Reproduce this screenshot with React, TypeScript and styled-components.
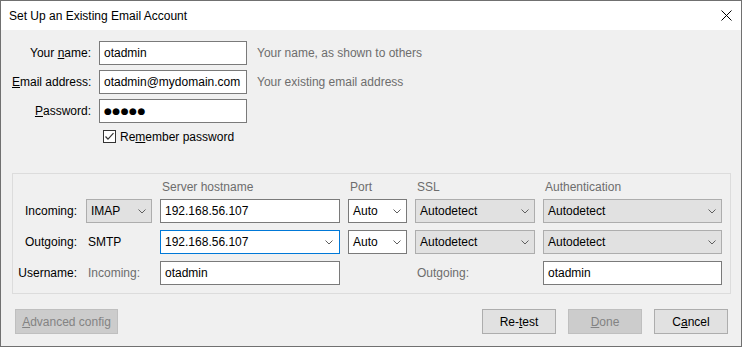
import styled, { createGlobalStyle } from 'styled-components';

const GlobalStyle = createGlobalStyle`
  html, body {
    margin: 0;
    padding: 0;
    background: #fff;
  }
  body {
    font-family: 'Liberation Sans', Arial, sans-serif;
    font-size: 12px;
    color: #000;
  }
`;

const Window = styled.div`
  width: 742px;
  height: 347px;
  box-sizing: border-box;
  border: 1px solid #707070;
  background: #f0f0f0;
  display: flex;
  flex-direction: column;
`;

const TitleBar = styled.div`
  height: 29px;
  background: #fff;
  display: flex;
  align-items: center;
  justify-content: space-between;
  padding: 0 9px 0 8px;
  font-size: 12px;
`;

const Body = styled.div`
  flex: 1;
  display: flex;
  flex-direction: column;
  padding: 11px 10px 0 11px;
`;

const AccountGrid = styled.div`
  display: grid;
  grid-template-columns: 79px 148px auto;
  grid-template-rows: 24px 24px 24px 17px;
  column-gap: 8px;
  row-gap: 5px;
  align-items: center;
`;

const FieldLabel = styled.label`
  text-align: right;
  white-space: nowrap;
`;

const Hint = styled.span`
  color: #6d6d6d;
  padding-left: 2px;
  white-space: nowrap;
`;

const Field = styled.div<{ $focused?: boolean }>`
  height: 24px;
  box-sizing: border-box;
  background: #fff;
  border: 1px solid ${p => (p.$focused ? '#0078d7' : '#7a7a7a')};
  padding: 0 6px 0 4px;
  display: flex;
  align-items: center;
  justify-content: space-between;
  white-space: nowrap;
  overflow: hidden;
`;

const Dots = styled.span`
  font-family: 'DejaVu Sans', sans-serif;
  font-size: 9px;
  letter-spacing: 0.5px;
`;

const CheckRow = styled.div`
  grid-column: 2 / 4;
  height: 17px;
  display: flex;
  align-items: center;
  gap: 4px;
  padding-left: 4px;
`;

const Group = styled.div`
  margin-top: 28px;
  border: 1px solid #dcdcdc;
  padding: 5px 7px 8px 0;
  display: flex;
  flex-direction: column;
  gap: 4px;
`;

const ServerGrid = styled.div`
  display: grid;
  grid-template-columns: 65px 66px 180px 59px 120px 179px;
  column-gap: 8px;
  row-gap: 7px;
  grid-auto-rows: 24px;
  align-items: center;
`;

const HeaderGrid = styled(ServerGrid)`
  grid-auto-rows: 16px;
`;

const ColHead = styled.span<{ $col: number }>`
  grid-column: ${p => p.$col};
  color: #6d6d6d;
  padding-left: 2px;
  line-height: 16px;
  white-space: nowrap;
`;

const RowLabel = styled.span`
  text-align: right;
  padding-right: 1px;
  white-space: nowrap;
`;

const PlainText = styled.span<{ $muted?: boolean }>`
  color: ${p => (p.$muted ? '#6d6d6d' : '#000')};
  padding-left: 2px;
  white-space: nowrap;
`;

const Select = styled.div<{ $tone: 'grey' | 'white' }>`
  height: 24px;
  box-sizing: border-box;
  background: ${p => (p.$tone === 'grey' ? '#e1e1e1' : '#fff')};
  border: 1px solid ${p => (p.$tone === 'grey' ? '#adadad' : '#7a7a7a')};
  padding: 0 5px 0 4px;
  display: flex;
  align-items: center;
  justify-content: space-between;
  white-space: nowrap;
`;

const ButtonRow = styled.div`
  margin-top: 15px;
  display: flex;
  align-items: center;
  padding: 0 3px;
`;

const Spacer = styled.div`
  flex: 1;
`;

const Actions = styled.div`
  display: flex;
  gap: 12px;
`;

const Button = styled.button<{ $width: number; $disabled?: boolean }>`
  width: ${p => p.$width}px;
  height: 25px;
  box-sizing: border-box;
  font-family: 'Liberation Sans', Arial, sans-serif;
  font-size: 12px;
  padding: 0;
  color: ${p => (p.$disabled ? '#838383' : '#000')};
  background: ${p => (p.$disabled ? '#cccccc' : '#e1e1e1')};
  border: 1px solid ${p => (p.$disabled ? '#bfbfbf' : '#adadad')};
  border-radius: 0;
`;

const Chevron = () => (
  <svg width="8" height="5" viewBox="0 0 8 5">
    <path d="M0.5 0.5 L4 4 L7.5 0.5" stroke="#5f5f5f" fill="none" strokeWidth="1" />
  </svg>
);

const CheckBox = () => (
  <svg width="13" height="13" viewBox="0 0 13 13">
    <rect x="0.5" y="0.5" width="12" height="12" fill="#fff" stroke="#333" />
    <path d="M2.5 6.5 L5 9.2 L10.5 3.2" stroke="#333" fill="none" strokeWidth="1.2" />
  </svg>
);

const CloseIcon = () => (
  <svg width="11" height="11" viewBox="0 0 11 11">
    <path d="M0.5 0.5 L10.5 10.5 M10.5 0.5 L0.5 10.5" stroke="#000" strokeWidth="1" fill="none" />
  </svg>
);

const App = () => {
  return (
    <>
      <GlobalStyle />
      <Window>
        <TitleBar>
          <span>Set Up an Existing Email Account</span>
          <CloseIcon />
        </TitleBar>
        <Body>
          <AccountGrid>
            <FieldLabel>Your <u>n</u>ame:</FieldLabel>
            <Field>otadmin</Field>
            <Hint>Your name, as shown to others</Hint>

            <FieldLabel><u>E</u>mail address:</FieldLabel>
            <Field>otadmin@mydomain.com</Field>
            <Hint>Your existing email address</Hint>

            <FieldLabel><u>P</u>assword:</FieldLabel>
            <Field><Dots>●●●●●</Dots></Field>
            <span />

            <span />
            <CheckRow>
              <CheckBox />
              <span>Re<u>m</u>ember password</span>
            </CheckRow>
          </AccountGrid>

          <Group>
            <HeaderGrid>
              <ColHead $col={3}>Server hostname</ColHead>
              <ColHead $col={4}>Port</ColHead>
              <ColHead $col={5}>SSL</ColHead>
              <ColHead $col={6}>Authentication</ColHead>
            </HeaderGrid>
            <ServerGrid>
              <RowLabel>Incoming:</RowLabel>
              <Select $tone="grey">IMAP<Chevron /></Select>
              <Field>192.168.56.107</Field>
              <Select $tone="white">Auto<Chevron /></Select>
              <Select $tone="grey">Autodetect<Chevron /></Select>
              <Select $tone="grey">Autodetect<Chevron /></Select>

              <RowLabel>Outgoing:</RowLabel>
              <PlainText>SMTP</PlainText>
              <Field $focused>192.168.56.107<Chevron /></Field>
              <Select $tone="white">Auto<Chevron /></Select>
              <Select $tone="grey">Autodetect<Chevron /></Select>
              <Select $tone="grey">Autodetect<Chevron /></Select>

              <RowLabel>Username:</RowLabel>
              <PlainText $muted>Incoming:</PlainText>
              <Field>otadmin</Field>
              <span />
              <PlainText $muted>Outgoing:</PlainText>
              <Field>otadmin</Field>
            </ServerGrid>
          </Group>

          <ButtonRow>
            <Button $width={103} $disabled><u>A</u>dvanced config</Button>
            <Spacer />
            <Actions>
              <Button $width={74}>Re-<u>t</u>est</Button>
              <Button $width={74} $disabled><u>D</u>one</Button>
              <Button $width={74}>C<u>a</u>ncel</Button>
            </Actions>
          </ButtonRow>
        </Body>
      </Window>
    </>
  );
};

export default App;
